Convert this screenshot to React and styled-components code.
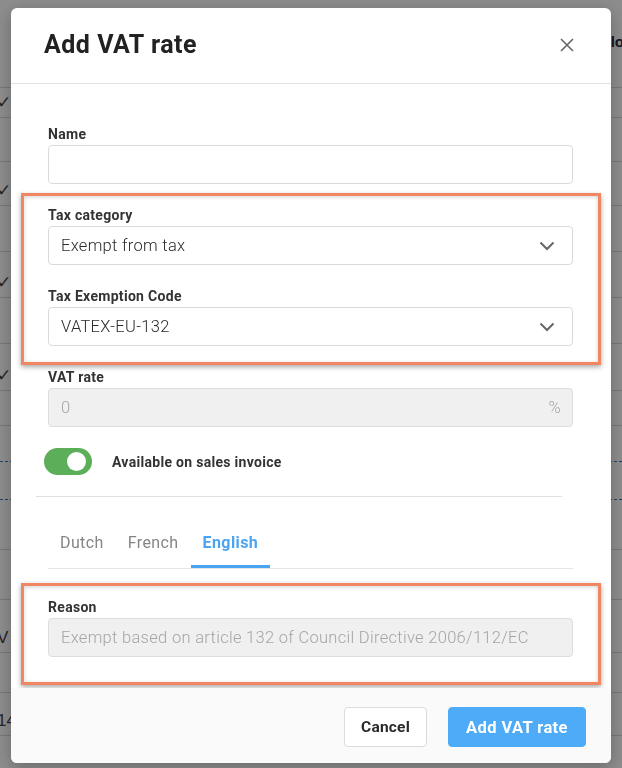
import React, { useState } from 'react'
import styled, { createGlobalStyle } from 'styled-components'

const GlobalStyle = createGlobalStyle`
  * {
    box-sizing: border-box;
  }

  html, body {
    margin: 0;
    padding: 0;
  }

  body {
    font-family: Roboto, "Liberation Sans", sans-serif;
    background: #fff;
    overflow: hidden;
  }
`

// rows of the table that sits behind the dialog
const rows = [
    { h: 88, right: 'lo', head: true },
    { h: 30, left: '✓' },
    { h: 44 }, { h: 44, left: '✓' },
    { h: 46 }, { h: 46, left: '✓' },
    { h: 46 }, { h: 47, left: '✓' },
    { h: 35 }, { h: 36, dashed: true }, { h: 38, dashed: true },
    { h: 50 }, { h: 50 }, { h: 53, left: 'V' },
    { h: 40 }, { h: 43, left: '14' }, { h: 40 },
]

const VatRateModal = () => {

    const [tab, setTab] = useState('English')
    const [available, setAvailable] = useState(true)

    const tabs = ['Dutch', 'French', 'English']

    const renderTabs = () => {
        return tabs.map((name) => {
            return <Tab key={name} $active={tab === name} onClick={() => setTab(name)}>{name}</Tab>
        })
    }

    return <>
        <GlobalStyle />
        <Page>
            {rows.map((row, index) => (
                <Row key={index} $h={row.h} $dashed={row.dashed} $head={row.head}>
                    <span>{row.left}</span>
                    <span>{row.right}</span>
                </Row>
            ))}
        </Page>
        <Overlay>
            <Modal>
                <Header>
                    <h2>Add VAT rate</h2>
                    <CloseButton aria-label="Close">
                        <svg width="14" height="14" viewBox="0 0 14 14">
                            <path d="M1 1 L13 13 M13 1 L1 13" stroke="#666" strokeWidth="1.6" fill="none" />
                        </svg>
                    </CloseButton>
                </Header>
                <Body>
                    <Field>
                        <Label>Name</Label>
                        <InputBox />
                    </Field>
                    <Highlight $pad="11px 25px 16px 24px" $margin="-14px -28px 4px -27px">
                        <Field>
                            <Label>Tax category</Label>
                            <InputBox $select>
                                <span>Exempt from tax</span>
                                <Chevron />
                            </InputBox>
                        </Field>
                        <Field>
                            <Label>Tax Exemption Code</Label>
                            <InputBox $select>
                                <span>VATEX-EU-132</span>
                                <Chevron />
                            </InputBox>
                        </Field>
                    </Highlight>
                    <Field>
                        <Label>VAT rate</Label>
                        <InputBox $disabled>
                            <span>0</span>
                            <span>%</span>
                        </InputBox>
                    </Field>
                    <ToggleRow>
                        <Toggle $on={available} onClick={() => setAvailable(!available)} />
                        <span>Available on sales invoice</span>
                    </ToggleRow>
                    <Divider />
                    <TabBar>
                        {renderTabs()}
                    </TabBar>
                    <Highlight $pad="13px 25px 25px 24px" $margin="14px -28px 0 -27px">
                        <Field>
                            <Label>Reason</Label>
                            <InputBox $disabled>
                                <span>Exempt based on article 132 of Council Directive 2006/112/EC</span>
                            </InputBox>
                        </Field>
                    </Highlight>
                </Body>
                <Footer>
                    <Button>Cancel</Button>
                    <Button $primary>Add VAT rate</Button>
                </Footer>
            </Modal>
        </Overlay>
    </>
}

const Chevron = () => (
    <svg width="16" height="10" viewBox="0 0 16 10">
        <polyline points="1.5,1.5 8,8 14.5,1.5" stroke="#666" strokeWidth="2" fill="none" />
    </svg>
)

export default VatRateModal

const Page = styled.div`
    height: 768px;
    overflow: hidden;
    background: #fff;
`

const Row = styled.div`
    display: flex;
    justify-content: space-between;
    align-items: ${props => props.$head ? 'center' : 'flex-end'};
    height: ${props => props.$h}px;
    border-bottom: 1px ${props => props.$dashed ? 'dashed #3a77c0' : 'solid #d8d8d8'};
    padding: 0 0 4px 0;
    font-family: "Liberation Sans", sans-serif;
    font-size: 17px;
    color: #333;

    span:first-child {
        margin-left: -3px;
        color: #444;
    }

    span:last-child {
        margin-right: -2px;
        font-weight: 700;
        font-size: 15px;
        color: #1c2a3c;
    }
`

const Overlay = styled.div`
    position: fixed;
    inset: 0;
    display: flex;
    justify-content: center;
    align-items: flex-start;
    padding-top: 8px;
    background: rgba(0, 0, 0, 0.45);
`

const Modal = styled.div`
    width: 600px;
    background: #fff;
    border-radius: 6px;
    overflow: hidden;
    box-shadow: 0 4px 16px rgba(0, 0, 0, 0.25);
`

const Header = styled.div`
    display: flex;
    align-items: center;
    justify-content: space-between;
    height: 76px;
    padding: 0 37px 0 33px;
    border-bottom: 1px solid #e2e2e2;

    h2 {
        margin: 0 0 2px 0;
        font-size: 25px;
        letter-spacing: 0.5px;
        font-weight: 700;
        color: #222;
    }
`

const CloseButton = styled.button`
    display: flex;
    padding: 0;
    border: none;
    background: none;
    cursor: pointer;
    margin-bottom: 2px;
`

const Body = styled.div`
    padding: 42px 38px 3px 37px;
`

const Highlight = styled.div`
    margin: ${props => props.$margin};
    padding: ${props => props.$pad};
    border: 3px solid #f08762;
    box-shadow: 0 2px 5px rgba(0, 0, 0, 0.35), inset 0 1px 4px rgba(0, 0, 0, 0.18);

    & > div:last-child {
        margin-bottom: 0;
    }
`

const Field = styled.div`
    margin-bottom: 23px;
`

const Label = styled.label`
    display: block;
    margin-bottom: 3px;
    font-size: 14px;
    line-height: 16px;
    letter-spacing: 0.3px;
    font-weight: 700;
    color: #333;
`

const InputBox = styled.div`
    display: flex;
    align-items: center;
    justify-content: space-between;
    height: 39px;
    padding: 0 ${props => props.$select ? '17px' : '11px'} 0 12px;
    border: 1px solid ${props => props.$disabled ? '#dcdddc' : '#dadada'};
    border-radius: 4px;
    background: ${props => props.$disabled ? '#eff0ef' : '#fff'};
    font-size: 16.5px;
    letter-spacing: 0.3px;
    font-weight: 300;
    color: ${props => props.$disabled ? '#a4a6a4' : '#2b2b2b'};
    white-space: nowrap;
`

const ToggleRow = styled.div`
    display: flex;
    align-items: center;
    gap: 20px;
    margin: -2px 0 0 -4px;
    font-size: 14px;
    letter-spacing: 0.3px;
    font-weight: 700;
    color: #333;
`

const Toggle = styled.div`
    position: relative;
    width: 48px;
    height: 27px;
    border-radius: 14px;
    background: ${props => props.$on ? '#5cae59' : '#ccc'};
    cursor: pointer;

    &::after {
        content: '';
        position: absolute;
        top: 4px;
        ${props => props.$on ? 'right: 6px;' : 'left: 6px;'}
        width: 19px;
        height: 19px;
        border-radius: 50%;
        background: #fff;
    }
`

const Divider = styled.div`
    margin: 21px 11px 0 -12px;
    border-top: 1px solid #e0e0e0;
`

const TabBar = styled.div`
    display: flex;
    margin-top: 25px;
    border-bottom: 1px solid #e6e6e6;
`

const Tab = styled.div`
    padding: 11px 12px 12px;
    font-size: 16px;
    line-height: 20px;
    letter-spacing: 0.4px;
    font-weight: ${props => props.$active ? 700 : 400};
    color: ${props => props.$active ? '#4ba4f2' : '#858585'};
    border-bottom: 3px solid ${props => props.$active ? '#4ba4f2' : 'transparent'};
    cursor: pointer;
`

const Footer = styled.div`
    display: flex;
    justify-content: flex-end;
    gap: 21px;
    padding: 19px 25px 16px;
    background: #fafafa;
`

const Button = styled.button`
    width: ${props => props.$primary ? '138px' : '83px'};
    height: 40px;
    padding: 0;
    border: 1px solid ${props => props.$primary ? '#4dabf7' : '#dcdcdc'};
    border-radius: 4px;
    background: ${props => props.$primary ? '#4dabf7' : '#fff'};
    color: ${props => props.$primary ? '#fff' : '#2a2a2a'};
    font-family: Roboto, "Liberation Sans", sans-serif;
    font-size: ${props => props.$primary ? '16.5px' : '15.5px'};
    letter-spacing: ${props => props.$primary ? '0.4px' : '0.2px'};
    font-weight: 700;
    cursor: pointer;
`
